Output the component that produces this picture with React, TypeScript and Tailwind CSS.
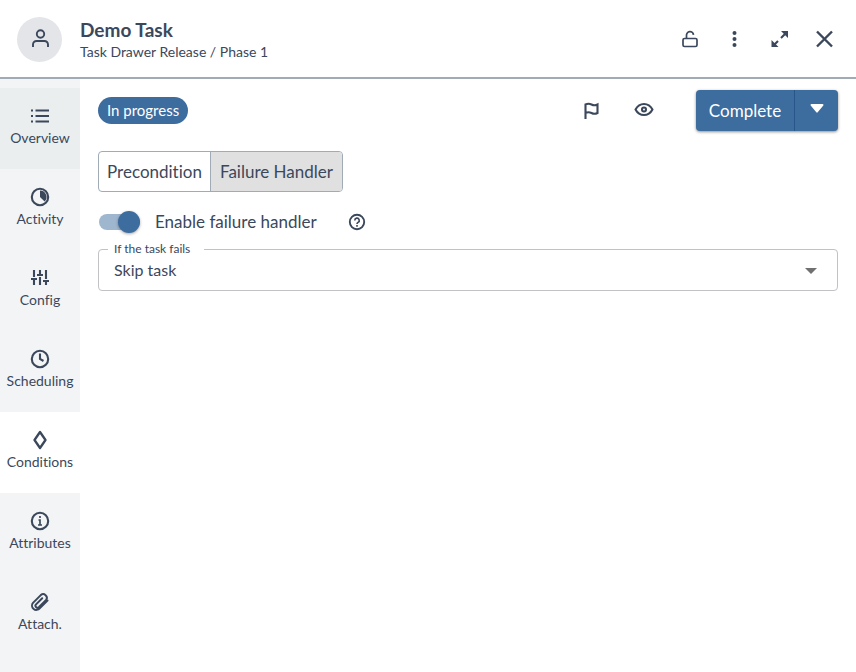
import { useState, type ReactNode } from "react";

function Icon({ children, size = 20, width = 2.1 }: { children: ReactNode; size?: number; width?: number }) {
  return (
    <svg width={size} height={size} viewBox="0 0 20 20" fill="none" stroke="currentColor" strokeWidth={width} aria-hidden="true" className="shrink-0">
      {children}
    </svg>
  );
}

const tabs: { label: string; icon: ReactNode }[] = [
  {
    label: "Overview",
    icon: (
      <Icon>
        <path d="M1 4.500h2M1 10h2M1 15.500h2M5.500 4.500H19M5.500 10H19M5.500 15.500H19" />
      </Icon>
    ),
  },
  {
    label: "Activity",
    icon: (
      <Icon>
        <circle cx="10" cy="10" r="8.200" />
        <path d="M10 3.500a6.500 6.500 0 0 1 4.600 11.100L10 10z" fill="currentColor" stroke="none" />
      </Icon>
    ),
  },
  {
    label: "Config",
    icon: (
      <Icon>
        <path d="M4 2v7M1 11h6M4 12v5M10 2v4M7 7h6M10 9v8M16 2v9M13 13h6M16 14v3" />
      </Icon>
    ),
  },
  {
    label: "Scheduling",
    icon: (
      <Icon>
        <circle cx="10" cy="10" r="8.200" />
        <path d="M10 4.500V10l3.500 2" />
      </Icon>
    ),
  },
  {
    label: "Conditions",
    icon: (
      <Icon width={2.3}>
        <path d="M10 2L15.500 10 10 18 4.500 10z" strokeLinejoin="round" />
      </Icon>
    ),
  },
  {
    label: "Attributes",
    icon: (
      <Icon>
        <circle cx="10" cy="10" r="8.200" />
        <path d="M10 5v2M8.500 9H10v4.500M8 14h4" strokeWidth="1.700" />
      </Icon>
    ),
  },
  {
    label: "Attach.",
    icon: (
      <Icon width={2}>
        <path
          d="M17.500 8.500l-7.800 7.800a4.300 4.300 0 0 1-6.700-5.400l7.800-7.800a3.600 3.600 0 0 1 5.300 4.800l-7.300 7.300a2 2 0 0 1-3-2.600l6.400-6.400"
          strokeLinecap="round"
          strokeLinejoin="round"
        />
      </Icon>
    ),
  },
];

export default function App() {
  const [active, setActive] = useState("Conditions");
  const [enabled, setEnabled] = useState(true);
  return (
    <div className="flex min-h-screen flex-col bg-white font-['Lato',sans-serif] text-[#3b485c] [font-variant-ligatures:none]">
      <header className="flex items-center border-b-2 border-[#a0abb6] px-[17px] pt-4 pb-[15px]">
        <div className="flex size-[45px] items-center justify-center rounded-full bg-[#e3e5e9]">
          <Icon width={1.9}>
            <circle cx="10.500" cy="5" r="3.700" />
            <path d="M3 18v-2.500a3.500 3.500 0 0 1 3.500-3.500h8a3.500 3.500 0 0 1 3.500 3.500V18" />
          </Icon>
        </div>
        <div className="ml-[18px] pt-0.5">
          <h1 className="text-[19px] leading-6 font-bold">Demo Task</h1>
          <p className="text-sm leading-5">Task Drawer Release / Phase 1</p>
        </div>
        <div className="ml-auto flex items-center gap-[17px]">
          <button type="button" aria-label="Unlock" className="flex size-7 items-center justify-center">
            <Icon width={1.7}>
              <rect x="3" y="9.500" width="14" height="8" rx="1.500" />
              <path d="M6.500 9.500V6.500a3.500 3.500 0 0 1 7-.7" />
            </Icon>
          </button>
          <button type="button" aria-label="More actions" className="flex size-7 items-center justify-center">
            <Icon>
              <g fill="currentColor" stroke="none">
                <circle cx="9.500" cy="4" r="2" />
                <circle cx="9.500" cy="10" r="2" />
                <circle cx="9.500" cy="16" r="2" />
              </g>
            </Icon>
          </button>
          <button type="button" aria-label="Expand" className="flex size-7 items-center justify-center">
            <Icon>
              <path d="M11 9L16 4M8 12L3 17" />
              <path d="M11 2h7v7zM1.500 11v7h7z" fill="currentColor" stroke="none" />
            </Icon>
          </button>
          <button type="button" aria-label="Close" className="flex size-7 items-center justify-center">
            <Icon width={2.4}>
              <path d="M2 2.500l15 15M17 2.500l-15 15" />
            </Icon>
          </button>
        </div>
      </header>

      <div className="flex grow">
        <nav className="w-20 shrink-0 bg-[#f3f4f6] pt-[9px]">
          {tabs.map((tab) => (
            <button
              key={tab.label}
              type="button"
              onClick={() => setActive(tab.label)}
              className={`flex h-[81px] w-full flex-col items-center justify-center gap-0.5 pb-1 text-sm ${
                tab.label === active ? "bg-white" : tab.label === "Overview" ? "bg-[#eaeeef]" : ""
              }`}
            >
              {tab.icon}
              <span>{tab.label}</span>
            </button>
          ))}
        </nav>

        <main className="grow px-[18px] pt-[11px]">
          <div className="flex items-center">
            <span className="rounded-full bg-[#3d6c9e] px-[9px] py-px text-[15px] leading-[25px] text-white">In progress</span>
            <button type="button" aria-label="Flag task" className="ml-auto flex size-8 items-center justify-center">
              <Icon>
                <path d="M3.500 18V3.500q3-1.500 6 0t6 0v8.500q-3 1.500-6 0t-6 0" />
              </Icon>
            </button>
            <button type="button" aria-label="Watch task" className="ml-5 flex size-8 items-center justify-center">
              <Icon>
                <path d="M1.500 8.500Q4.500 3 10 3t8.500 5.500Q15.500 14 10 14T1.500 8.500z" strokeLinejoin="round" />
                <circle cx="10" cy="8.500" r="2" />
              </Icon>
            </button>
            <div className="ml-9 flex h-[41px] rounded bg-[#3d6c9e] text-white shadow-[0_1px_3px_rgba(0,0,0,0.45)]">
              <button type="button" className="w-[99px] border-r border-[#28558a] text-[17px]">
                Complete
              </button>
              <button type="button" aria-label="More completion options" className="flex w-[43px] items-center justify-center pb-1">
                <svg width="14" height="9" viewBox="0 0 14 9" fill="currentColor" aria-hidden="true">
                  <path d="M1.500 0h11a1 1 0 0 1 .8 1.600L7.700 8.300a1 1 0 0 1-1.400 0L.7 1.600A1 1 0 0 1 1.500 0z" />
                </svg>
              </button>
            </div>
          </div>

          <div className="mt-5 inline-flex h-[41px] overflow-hidden rounded border border-[#a0abb6] text-[17px]">
            <button type="button" className="w-[111px]">
              Precondition
            </button>
            <button type="button" aria-pressed="true" className="w-[132px] border-l border-[#a0abb6] bg-[#e0e0e0]">
              Failure Handler
            </button>
          </div>

          <div className="mt-3 mb-px flex h-9 items-center">
            <label className="flex items-center text-[17px]">
              <input type="checkbox" role="switch" checked={enabled} onChange={() => setEnabled(!enabled)} className="peer sr-only" />
              <span className="ml-px flex h-4 w-[41px] items-center justify-start rounded-full bg-[#9fb6cf] peer-checked:justify-end">
                <span className="size-[22px] rounded-full bg-[#3d6c9e] shadow-[0_1px_3px_rgba(0,0,0,0.35)]" />
              </span>
              <span className="ml-[15px] w-[193px]">Enable failure handler</span>
            </label>
            <button type="button" aria-label="Help">
              <Icon size={18}>
                <circle cx="10" cy="10" r="8" />
                <path d="M7.500 8.200a2.500 2.500 0 1 1 3.700 2.200q-1.200.7-1.200 1.700M10 13.300v2" strokeWidth="1.800" />
              </Icon>
            </button>
          </div>

          <fieldset className="relative min-w-0 rounded border border-[#c0c2c5] pl-[9px]">
            <legend className="h-4 px-1.5 text-xs leading-4">
              <label htmlFor="failure-action" className="pr-2">
                If the task fails
              </label>
            </legend>
            <select id="failure-action" className="-mt-1 h-[37px] w-full appearance-none bg-transparent pr-10 pb-1 pl-1.5 text-base outline-none">
              <option>Skip task</option>
              <option>Define additional action</option>
              <option>Run script</option>
            </select>
            <svg width="12" height="6" viewBox="0 0 12 6" fill="#707070" aria-hidden="true" className="pointer-events-none absolute right-5 bottom-4">
              <path d="M0 0h12L6 6z" />
            </svg>
          </fieldset>
        </main>
      </div>
    </div>
  );
}
